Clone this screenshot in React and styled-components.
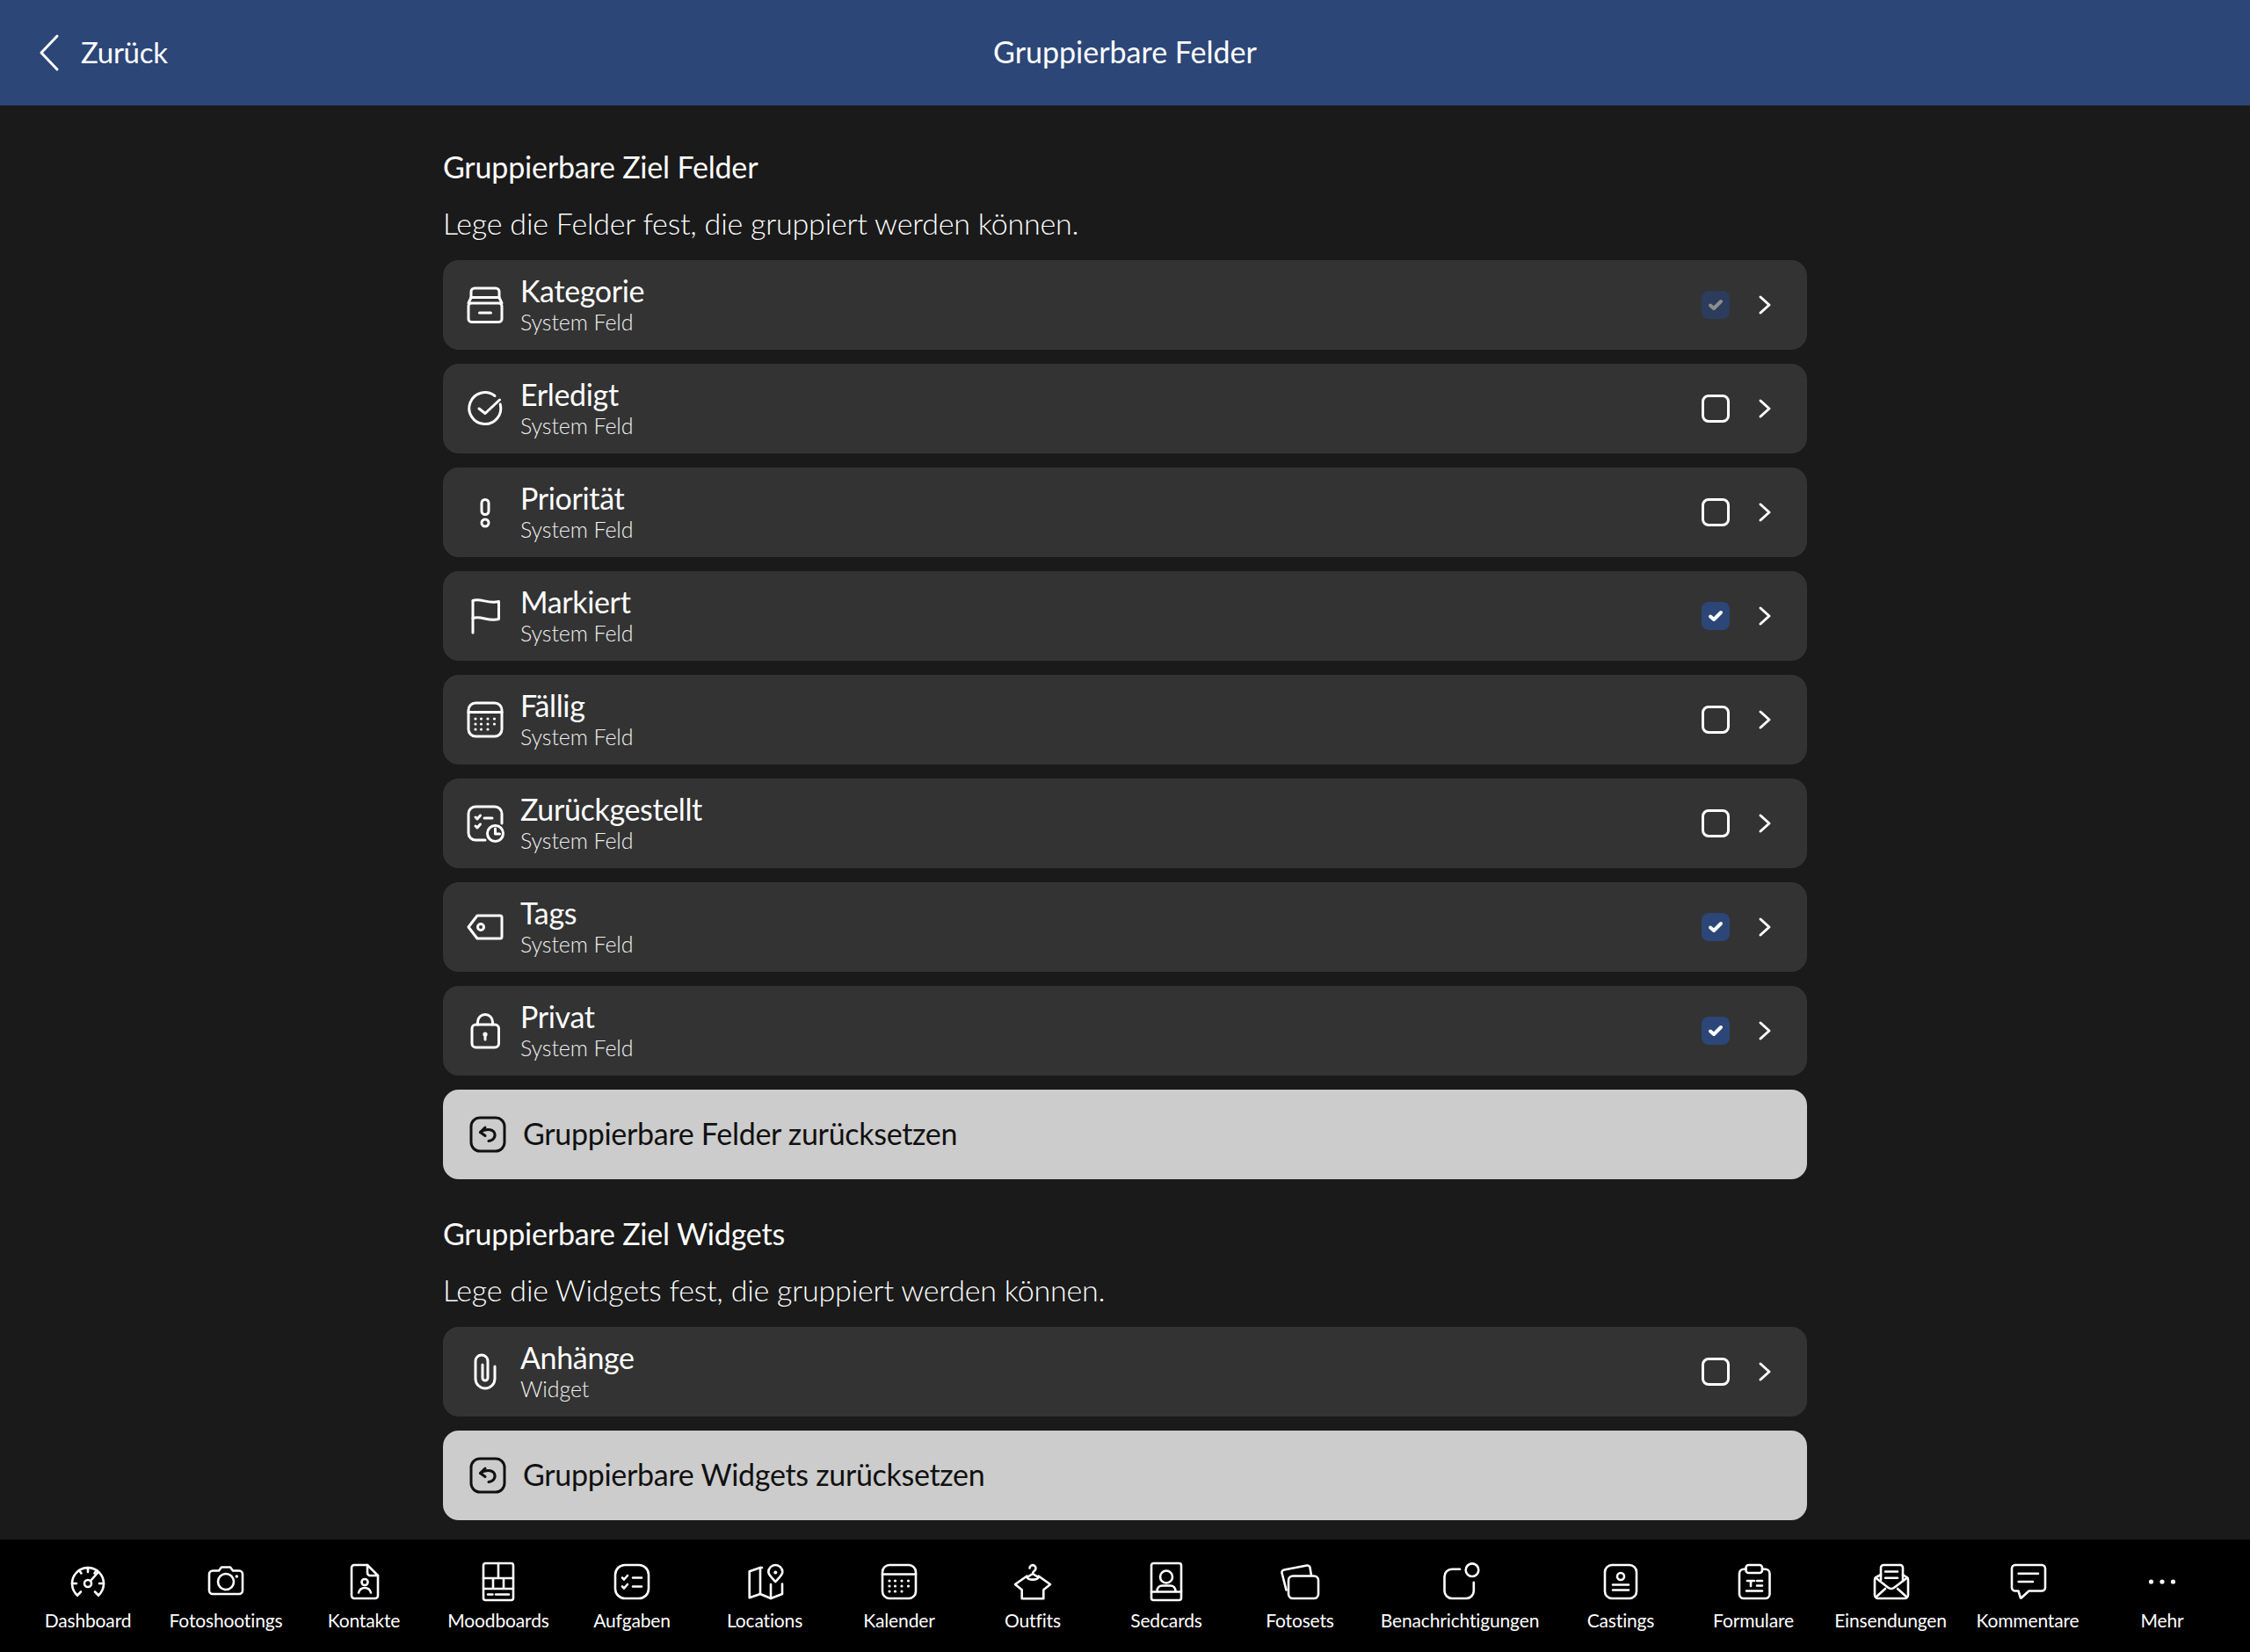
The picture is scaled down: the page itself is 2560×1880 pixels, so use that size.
import React from 'react'
import styled, { createGlobalStyle } from 'styled-components'

const GlobalStyle = createGlobalStyle`
  html, body {
    margin: 0;
    padding: 0;
    background: #1a1a1a;
  }
  * { box-sizing: border-box; }
`

const Page = styled.div`
  width: 2560px;
  height: 1880px;
  display: flex;
  flex-direction: column;
  background: #1a1a1a;
  color: #fff;
  font-family: 'Lato', 'Open Sans', sans-serif;
  overflow: hidden;
`

const TopBar = styled.header`
  height: 120px;
  flex: none;
  display: grid;
  grid-template-columns: 1fr auto 1fr;
  align-items: center;
  background: #2c4677;
`

const BackLink = styled.div`
  display: flex;
  align-items: center;
  gap: 18px;
  padding-left: 40px;
`

const BackLabel = styled.span`
  padding-bottom: 3px;
  font-size: 33px;
  letter-spacing: -0.3px;
`

const TopTitle = styled.div`
  padding-bottom: 3px;
  font-size: 34px;
`

const Main = styled.main`
  flex: 1;
  width: 1552px;
  margin: 0 auto;
  padding-top: 50px;
`

const SectionTitle = styled.h2`
  margin: ${(p) => (p.$second ? '42px' : '0')} 0 0;
  font-size: 34px;
  line-height: 40px;
  font-weight: 400;
  letter-spacing: -0.2px;
`

const SectionHint = styled.p`
  margin: 24px 0 22px;
  font-size: 34px;
  line-height: 40px;
  font-weight: 300;
  letter-spacing: -0.2px;
  color: #fff;
`

const List = styled.div`
  display: flex;
  flex-direction: column;
  gap: 16px;
`

const Row = styled.div`
  height: 102px;
  display: flex;
  align-items: center;
  padding: 0 36px 0 24px;
  border-radius: 18px;
  background: #333333;
`

const RowText = styled.div`
  flex: 1;
  margin-left: 16px;
  display: flex;
  flex-direction: column;
`

const RowTitle = styled.div`
  font-size: 34px;
  line-height: 38px;
  letter-spacing: -0.35px;
`

const RowSub = styled.div`
  font-size: 25px;
  line-height: 32px;
  font-weight: 300;
  letter-spacing: -0.1px;
  color: #f0f0f0;
`

const CheckBox = styled.div`
  width: 32px;
  height: 32px;
  display: flex;
  align-items: center;
  justify-content: center;
  margin-right: 28px;
  border-radius: 8px;
  border: ${(p) => (p.$state === 'off' ? '3px solid #fff' : 'none')};
  background: ${(p) =>
    p.$state === 'on' ? '#2c4677' : p.$state === 'locked' ? '#2c3c5c' : 'transparent'};
  color: ${(p) => (p.$state === 'locked' ? '#8e8e8e' : '#fff')};
`

const ResetButton = styled.div`
  height: 102px;
  display: flex;
  align-items: center;
  gap: 16px;
  padding-left: 27px;
  border-radius: 18px;
  background: #cccccc;
  color: #111;
`

const ResetLabel = styled.span`
  padding-bottom: 3px;
  font-size: 34px;
  letter-spacing: -0.3px;
`

const TabBar = styled.nav`
  height: 128px;
  flex: none;
  display: flex;
  padding: 24px 0 0 24px;
  background: #000;
`

const Tab = styled.div`
  width: ${(p) => p.$w}px;
  flex: none;
  display: flex;
  flex-direction: column;
  align-items: center;
`

const TabLabel = styled.div`
  margin-top: 6px;
  font-size: 21px;
  line-height: 28px;
  letter-spacing: -0.15px;
  white-space: nowrap;
`

const Svg = styled.svg`
  flex: none;
  display: block;
  fill: none;
  stroke: currentColor;
  stroke-width: ${(p) => p.$sw || 3};
  stroke-linecap: round;
  stroke-linejoin: round;
  .dot {
    fill: currentColor;
    stroke: none;
  }
`

const Icon = ({ sw, children }) => (
  <Svg $sw={sw} width="48" height="48" viewBox="0 0 48 48">
    {children}
  </Svg>
)

const Dots = () => {
  const xs = [13, 19.5, 27, 34.5]
  const ys = [23, 29, 35]
  return ys.flatMap((y, r) =>
    xs.slice(0, r === 2 ? 3 : 4).map((x) => <circle key={`${x}-${y}`} className="dot" cx={x} cy={y} r="1.6" />)
  )
}

const CalendarShape = () => (
  <>
    <rect x="5" y="5" width="38" height="38" rx="8" />
    <path d="M5 15.5h38" />
    <Dots />
  </>
)

// list icons
const rowIcons = {
  kategorie: (
    <>
      <path d="M8 16v-7a4 4 0 0 1 4-4h24a4 4 0 0 1 4 4v7" />
      <path d="M8 15.5h32l3 6.5M8 15.5l-3 6.5" />
      <rect x="5" y="22" width="38" height="21.5" rx="3.5" />
      <path d="M17.5 33h13" />
    </>
  ),
  erledigt: (
    <>
      <path d="M35 9.5a18 18 0 1 0 6.200 9.500" />
      <path d="M17 24l7 5.500L40.500 14" />
    </>
  ),
  prioritaet: (
    <>
      <rect x="20" y="9.500" width="8" height="17" rx="4" />
      <circle cx="24" cy="36" r="4" />
    </>
  ),
  markiert: (
    <>
      <path d="M10 43V7" />
      <path d="M10 6.500c9-3 17 4 29.500 1v20c-12 3-20-4-29.500-1" />
    </>
  ),
  faellig: <CalendarShape />,
  zurueck: (
    <>
      <path d="M43 24V13a8 8 0 0 0-8-8H13a8 8 0 0 0-8 8v22a8 8 0 0 0 8 8h11" />
      <path d="M13 17l2 2 3.500-4M13 27l2 2 3.500-4M23 18h9" />
      <circle cx="35.500" cy="35.500" r="9" />
      <path d="M35.500 30v6h5" />
    </>
  ),
  tags: (
    <>
      <path d="M15 11h26a2 2 0 0 1 2 2v22a2 2 0 0 1-2 2H15L5 24z" />
      <circle cx="19" cy="24" r="3.500" />
    </>
  ),
  privat: (
    <>
      <path d="M15.500 17v-3a8.500 8.500 0 0 1 17 0v3" />
      <rect x="9" y="17" width="30.500" height="26" rx="4.500" />
      <circle className="dot" cx="24" cy="28" r="2.600" />
      <path d="M24 28v6" />
    </>
  ),
  anhaenge: (
    <path d="M35 18v14a11 11 0 0 1-22 0V12a7 7 0 0 1 14 0v19a3 3 0 0 1-6 0V16" />
  )
}

// tab bar icons
const tabIcons = {
  dashboard: (
    <>
      <path d="M12 39.500A18 18 0 1 1 36 39.500" />
      <path d="M12 39.500l4-4M36 39.500l-4-4" />
      <path d="M24 8v5M14 11l2.500 3.500M34 11l-2.500 3.500M6 26h5M37 26h5" />
      <circle cx="24" cy="26" r="4" />
      <path d="M27 23l8-9" />
    </>
  ),
  foto: (
    <>
      <path d="M9 11.500h7l3-4h10l3 4h7a4 4 0 0 1 4 4V34a4 4 0 0 1-4 4H9a4 4 0 0 1-4-4V15.500a4 4 0 0 1 4-4z" />
      <circle cx="24" cy="24" r="9" />
      <circle className="dot" cx="36.300" cy="18" r="1.800" />
    </>
  ),
  kontakte: (
    <>
      <path d="M28 5H13a3 3 0 0 0-3 3v32a3 3 0 0 0 3 3h24a3 3 0 0 0 3-3V17z" />
      <path d="M28 5v9a3 3 0 0 0 3 3h9" />
      <circle cx="25" cy="24.500" r="3.500" />
      <path d="M18 36.500c1-3.500 4-5.500 7-5.500s6 2 7 5.500" />
    </>
  ),
  mood: (
    <>
      <rect x="7" y="3" width="34" height="42" rx="2.500" />
      <path d="M7 20h34M7 32h34M24 3v17M18 20v12M30 20v12M12 38.500h5.500M21 38.500h15" />
    </>
  ),
  aufgaben: (
    <>
      <rect x="5" y="5" width="38" height="38" rx="11" />
      <path d="M13 19.500l2 2 4-4.500M13 29.500l2 2 4-4.500M25 19.500h10M25 29.500h10" />
    </>
  ),
  locations: (
    <>
      <path d="M21 8h-2L6.700 12.300v30L19 38l12 5 13-5V26.500" />
      <path d="M19 8v30M31 27v16" />
      <path d="M36.300 24c-4-4.500-8-7.800-8-11a8 8 0 0 1 16 0c0 3.200-4 6.500-8 11z" />
      <circle className="dot" cx="36.300" cy="13.500" r="2" />
    </>
  ),
  kalender: <CalendarShape />,
  outfits: (
    <>
      <path d="M20.500 8.500a3.500 3.500 0 1 1 5.500 3c-1.500 1-2 1.500-2 3.500l-6.500 4M24 15l6.500 4" />
      <path d="M17.500 17.500L4 27l7.700 6.300V43.300h24.600V33.300L44 27l-13.500-9.500" />
      <path d="M17.500 19c1.500 3.500 11.500 3.500 13 0" />
    </>
  ),
  sedcards: (
    <>
      <rect x="7" y="3" width="34" height="42" rx="2.500" />
      <circle cx="24" cy="18.500" r="7" />
      <path d="M7 35.500h34M13.500 35c0-4 2.500-6.500 6-6.500h9c3.500 0 6 2.500 6 6.500" />
    </>
  ),
  fotosets: (
    <>
      <path d="M8.500 33.500L3.500 14a3 3 0 0 1 2.500-3.500l26-5a3 3 0 0 1 3.500 2.500l1.500 9" />
      <rect x="11" y="17.500" width="34" height="25.500" rx="5" />
    </>
  ),
  benach: (
    <>
      <path d="M24 9.700h-9a8.500 8.500 0 0 0-8.500 8.500v16.300a8.500 8.500 0 0 0 8.500 8.500h16.300a8.500 8.500 0 0 0 8.500-8.500v-9.800" />
      <circle cx="38" cy="10.700" r="7.300" />
    </>
  ),
  castings: (
    <>
      <rect x="6" y="5" width="36" height="38" rx="8" />
      <circle cx="24" cy="18" r="4" />
      <path d="M15 27.500h18M15 33.500h18" />
    </>
  ),
  formulare: (
    <>
      <path d="M15.500 9.700H13a5 5 0 0 0-5 5V38a5 5 0 0 0 5 5h24.500a5 5 0 0 0 5-5V14.700a5 5 0 0 0-5-5H34" />
      <rect x="15.500" y="5" width="18.500" height="9" rx="3" />
      <path d="M17 23h8M21 23v6M28 23h6M28 28.500h6M16 34.500h18" />
    </>
  ),
  einsend: (
    <>
      <path d="M13 22V8a3 3 0 0 1 3-3h19a3 3 0 0 1 3 3v14" />
      <path d="M18 12.500h14M18 19.700h14" />
      <path d="M13 16l-5.500 3a3 3 0 0 0-1.500 2.500V39a4 4 0 0 0 4 4h30a4 4 0 0 0 4-4V21.500a3 3 0 0 0-1.500-2.500L38 16" />
      <path d="M7 19.500l14 11a6 6 0 0 0 7.500 0l14.500-11M8 41l10-9M42 41l-10-9" />
    </>
  ),
  kommentare: (
    <>
      <path d="M10 5h30a4 4 0 0 1 4 4v21.500a4 4 0 0 1-4 4H25.500L17 42.300c-.5.5-1 .3-1.200-.3L13.500 34.500H10a4 4 0 0 1-4-4V9a4 4 0 0 1 4-4z" />
      <path d="M13.700 14.700H36M13.700 24H30" />
    </>
  ),
  mehr: (
    <>
      <circle className="dot" cx="11.500" cy="24" r="2.600" />
      <circle className="dot" cx="24" cy="24" r="2.600" />
      <circle className="dot" cx="36.500" cy="24" r="2.600" />
    </>
  )
}

const fields = [
  { icon: 'kategorie', title: 'Kategorie', state: 'locked' },
  { icon: 'erledigt', title: 'Erledigt', state: 'off' },
  { icon: 'prioritaet', title: 'Priorität', state: 'off' },
  { icon: 'markiert', title: 'Markiert', state: 'on' },
  { icon: 'faellig', title: 'Fällig', state: 'off' },
  { icon: 'zurueck', title: 'Zurückgestellt', state: 'off' },
  { icon: 'tags', title: 'Tags', state: 'on' },
  { icon: 'privat', title: 'Privat', state: 'on' }
]

const tabs = [
  { icon: 'dashboard', label: 'Dashboard', w: 152 },
  { icon: 'foto', label: 'Fotoshootings', w: 162 },
  { icon: 'kontakte', label: 'Kontakte', w: 152 },
  { icon: 'mood', label: 'Moodboards', w: 154 },
  { icon: 'aufgaben', label: 'Aufgaben', w: 150 },
  { icon: 'locations', label: 'Locations', w: 152 },
  { icon: 'kalender', label: 'Kalender', w: 154 },
  { icon: 'outfits', label: 'Outfits', w: 150 },
  { icon: 'sedcards', label: 'Sedcards', w: 154 },
  { icon: 'fotosets', label: 'Fotosets', w: 150 },
  { icon: 'benach', label: 'Benachrichtigungen', w: 214 },
  { icon: 'castings', label: 'Castings', w: 152 },
  { icon: 'formulare', label: 'Formulare', w: 150 },
  { icon: 'einsend', label: 'Einsendungen', w: 162 },
  { icon: 'kommentare', label: 'Kommentare', w: 150 },
  { icon: 'mehr', label: 'Mehr', w: 156 }
]

const FieldRow = ({ icon, title, sub, state }) => (
  <Row>
    <Icon>{rowIcons[icon]}</Icon>
    <RowText>
      <RowTitle>{title}</RowTitle>
      <RowSub>{sub}</RowSub>
    </RowText>
    <CheckBox $state={state}>
      {state !== 'off' && (
        <Svg $sw={4} width="20" height="20" viewBox="0 0 20 20">
          <path d="M4 10.500l4 3.500 8-8" />
        </Svg>
      )}
    </CheckBox>
    <Svg $sw={3} width="24" height="24" viewBox="0 0 24 24">
      <path d="M7 3l10 9-10 9" />
    </Svg>
  </Row>
)

const Reset = ({ children }) => (
  <ResetButton>
    <Icon>
      <rect x="5" y="5" width="38" height="38" rx="10" />
      <path d="M21 16l-5.500 5.500 5.500 4" />
      <path d="M15.500 21.500C20 17.500 29 17 31.500 22 33.500 27 30 31 25 31.500" />
    </Icon>
    <ResetLabel>{children}</ResetLabel>
  </ResetButton>
)

export default function App() {
  return (
    <Page>
      <GlobalStyle />
      <TopBar>
        <BackLink>
          <Svg $sw={3} width="34" height="48" viewBox="0 0 34 48">
            <path d="M25 5L7 24l18 19" />
          </Svg>
          <BackLabel>Zurück</BackLabel>
        </BackLink>
        <TopTitle>Gruppierbare Felder</TopTitle>
      </TopBar>

      <Main>
        <SectionTitle>Gruppierbare Ziel Felder</SectionTitle>
        <SectionHint>Lege die Felder fest, die gruppiert werden können.</SectionHint>
        <List>
          {fields.map((f) => (
            <FieldRow key={f.title} sub="System Feld" {...f} />
          ))}
          <Reset>Gruppierbare Felder zurücksetzen</Reset>
        </List>

        <SectionTitle $second>Gruppierbare Ziel Widgets</SectionTitle>
        <SectionHint>Lege die Widgets fest, die gruppiert werden können.</SectionHint>
        <List>
          <FieldRow icon="anhaenge" title="Anhänge" sub="Widget" state="off" />
          <Reset>Gruppierbare Widgets zurücksetzen</Reset>
        </List>
      </Main>

      <TabBar>
        {tabs.map((t) => (
          <Tab key={t.label} $w={t.w}>
            <Icon sw={2.6}>{tabIcons[t.icon]}</Icon>
            <TabLabel>{t.label}</TabLabel>
          </Tab>
        ))}
      </TabBar>
    </Page>
  )
}
